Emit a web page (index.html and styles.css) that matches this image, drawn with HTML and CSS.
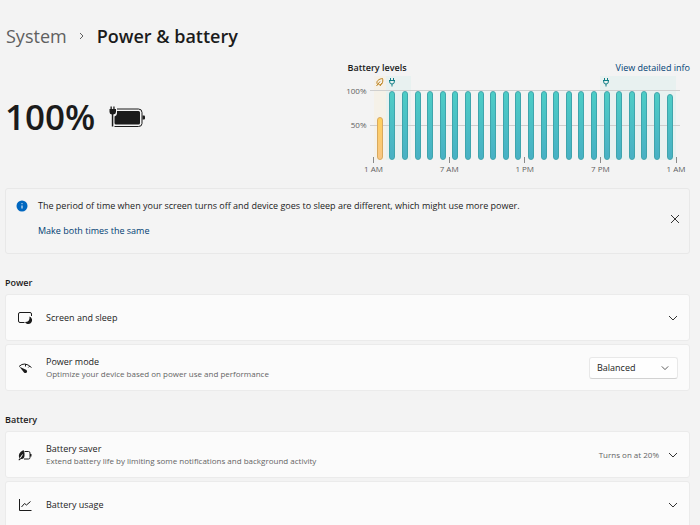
FILE: index.html
```
<!DOCTYPE html>
<html lang="en">
<head>
    <meta charset="utf-8">
    <meta name="viewport" content="width=device-width, initial-scale=1.0">
    <title>Power &amp; battery</title>
    <link rel="stylesheet" href="styles.css">
</head>
<body>
    <nav class="breadcrumb">
        <a href="#">System</a>
        <svg class="crumb-arrow" viewBox="0 0 6 10"><path d="M1 2l3 3-3 3"/></svg>
        <h1>Power &amp; battery</h1>
    </nav>

    <div class="overview">
        <div class="charge">
            <span class="percent">100%</span>
            <svg class="battery" viewBox="0 0 36 22">
                <path class="line" d="M8 3H29.500Q33 3 33 6.500V17.500Q33 20.500 29.500 20.500H5.500"/>
                <path d="M9.500 5H29.500Q31 5 31 6.500V17Q31 18.500 29.500 18.500H7Q5.500 18.500 5.500 17V10.500Q8 9.500 8 7.500V5Z"/>
                <path d="M33.500 9.500H35Q36 9.500 36 10.500V12.500Q36 13.500 35 13.500H33.500Z"/>
                <path d="M1.500 0.500H2.800V3H4.300V0.500H5.600V3H7V6Q7 8 4.300 8.500V20.500H2.800V8.500Q0.500 8 0.500 6V3H1.500Z"/>
            </svg>
        </div>

        <div class="levels">
            <div class="levels-head">
                <h2>Battery levels</h2>
                <a href="#">View detailed info</a>
            </div>
            <div class="chart">
                <div class="y-axis">
                    <span>100%</span>
                    <span>50%</span>
                </div>
                <div class="plot">
                    <div class="bands">
                        <div class="band saver">
                            <svg viewBox="0 0 10 10"><path d="M2.500 7.500C0.500 4 4 2 7.500 1.500C8.500 5 7 8.500 3.500 7.500M1.500 9L5 4.500M5 9L7 6"/></svg>
                        </div>
                        <div class="band plugged">
                            <svg viewBox="0 0 10 10"><path d="M3.500 1V3M6.500 1V3M2 3.500H8M2.700 3.500V5Q2.700 7 5 7Q7.300 7 7.300 5V3.500M5 7V9.500"/></svg>
                        </div>
                        <div class="band plugged evening">
                            <svg viewBox="0 0 10 10"><path d="M3.500 1V3M6.500 1V3M2 3.500H8M2.700 3.500V5Q2.700 7 5 7Q7.300 7 7.300 5V3.500M5 7V9.500"/></svg>
                        </div>
                    </div>
                    <div class="grid-lines"></div>
                    <div class="bars">
                        <i class="low" style="height: 62%"></i>
                        <i style="height: 100%"></i>
                        <i style="height: 100%"></i>
                        <i style="height: 100%"></i>
                        <i style="height: 100%"></i>
                        <i style="height: 100%"></i>
                        <i style="height: 100%"></i>
                        <i style="height: 100%"></i>
                        <i style="height: 100%"></i>
                        <i style="height: 100%"></i>
                        <i style="height: 100%"></i>
                        <i style="height: 100%"></i>
                        <i style="height: 100%"></i>
                        <i style="height: 100%"></i>
                        <i style="height: 100%"></i>
                        <i style="height: 100%"></i>
                        <i style="height: 100%"></i>
                        <i style="height: 100%"></i>
                        <i style="height: 100%"></i>
                        <i style="height: 100%"></i>
                        <i style="height: 100%"></i>
                        <i style="height: 100%"></i>
                        <i style="height: 99%"></i>
                        <i style="height: 96%"></i>
                    </div>
                </div>
                <div class="x-axis">
                    <span>1 AM</span>
                    <span>7 AM</span>
                    <span>1 PM</span>
                    <span>7 PM</span>
                    <span>1 AM</span>
                </div>
            </div>
        </div>
    </div>

    <div class="notice">
        <svg class="info" viewBox="0 0 12 12"><circle cx="6" cy="6" r="5.500"/><path d="M6 5.500V8.500M6 3.200V4.200"/></svg>
        <div class="notice-text">
            <p>The period of time when your screen turns off and device goes to sleep are different, which might use more power.</p>
            <a href="#">Make both times the same</a>
        </div>
        <button class="close" aria-label="Close">
            <svg viewBox="0 0 10 10"><path d="M1 1l8 8M9 1l-8 8"/></svg>
        </button>
    </div>

    <section>
        <h2>Power</h2>
        <button class="card">
            <svg class="icon" viewBox="0 0 16 16">
                <path class="line" d="M7.500 12.500H3Q1.500 12.500 1.500 11V4Q1.500 2.500 3 2.500H13Q14.500 2.500 14.500 4V6"/>
                <path d="M12.500 6.500Q15.500 8 15 11Q14 14.500 10.500 14Q8.500 13.500 8 12Q13 12 12.500 6.500Z"/>
            </svg>
            <span class="label">Screen and sleep</span>
            <svg class="chevron" viewBox="0 0 10 6"><path d="M1 1l4 4 4-4"/></svg>
        </button>
        <div class="card">
            <svg class="icon" viewBox="0 0 16 16">
                <path class="line" d="M2 6.500Q7.500 1 14.500 7.500M8.500 4V6.500M12.800 6L11.300 7.500"/>
                <path d="M2.500 6.700L9.500 10Q10.800 11.500 9.500 12.700Q8 13.500 7 12.500Z"/>
            </svg>
            <label class="label" for="mode">Power mode
                <small>Optimize your device based on power use and performance</small>
            </label>
            <div class="select">
                <select id="mode">
                    <option>Best power efficiency</option>
                    <option selected>Balanced</option>
                    <option>Best performance</option>
                </select>
                <svg class="chevron" viewBox="0 0 10 6"><path d="M1 1l4 4 4-4"/></svg>
            </div>
        </div>
    </section>

    <section>
        <h2>Battery</h2>
        <button class="card">
            <svg class="icon" viewBox="0 0 16 16">
                <path class="line" d="M7.500 4.500H11.500Q13 4.500 13 6V10.500Q13 12 11.500 12H7"/>
                <path d="M13 7H14.500V9.500H13Z"/>
                <path d="M6.500 3Q8 6 7.500 9Q7 12.500 4 12L2 13.500L1.500 12.700L2.500 11.500Q0 6 6.500 3Z"/>
                <path class="vein" d="M3 11.500L5.500 7.500"/>
            </svg>
            <span class="label">Battery saver
                <small>Extend battery life by limiting some notifications and background activity</small>
            </span>
            <span class="state">Turns on at 20%</span>
            <svg class="chevron" viewBox="0 0 10 6"><path d="M1 1l4 4 4-4"/></svg>
        </button>
        <button class="card">
            <svg class="icon" viewBox="0 0 16 16">
                <path class="line" d="M2.500 2V13.500H14.500M4.500 10L7.500 6.500L9.500 8L13.500 4.500"/>
            </svg>
            <span class="label">Battery usage</span>
            <svg class="chevron" viewBox="0 0 10 6"><path d="M1 1l4 4 4-4"/></svg>
        </button>
    </section>
</body>
</html>
```
FILE: styles.css
```
* {
    box-sizing: border-box;
}
body {
    margin: 0;
    padding: 23px 10px 0 5px;
    background: #f3f3f3;
    color: #1b1b1b;
    font-family: "Open Sans", "Noto Sans", sans-serif;
    font-size: 9px;
    line-height: 12px;
}
h1, h2, p {
    margin: 0;
}
a {
    color: #003e73;
    text-decoration: none;
}
button, select {
    font: inherit;
    color: inherit;
}
svg {
    display: block;
    flex: none;
}
h2 {
    font-size: 9px;
    font-weight: 600;
}

.breadcrumb {
    display: flex;
    align-items: center;
    padding-left: 1px;
    font-size: 18px;
    line-height: 26px;
}
.breadcrumb a {
    color: #5f5f5f;
}
.breadcrumb h1 {
    font-size: 18px;
    font-weight: 600;
}
.crumb-arrow {
    width: 6px;
    height: 10px;
    margin: 0 12px;
    fill: none;
    stroke: #5f5f5f;
}

.overview {
    display: grid;
    grid-template-columns: 1fr 1fr;
    margin-top: 13px;
}
.charge {
    display: flex;
    align-items: center;
    gap: 14px;
    padding-bottom: 4px;
}
.percent {
    font-size: 35px;
    font-weight: 600;
    line-height: 48px;
}
.battery {
    width: 36px;
    height: 22px;
    fill: #1b1b1b;
}
.line {
    fill: none;
    stroke: #1b1b1b;
}

/* battery levels chart */
.levels-head {
    display: flex;
    justify-content: space-between;
}
.chart {
    display: grid;
    grid-template-columns: 19px 1fr;
    column-gap: 7px;
    padding: 2px 14px 0 0;
    color: #5f5f5f;
    font-size: 8px;
}
.y-axis {
    display: flex;
    flex-direction: column;
    align-items: flex-end;
    gap: 22px;
    padding-top: 9px;
}
.plot {
    display: grid;
    height: 84px;
}
.bands, .grid-lines, .bars {
    grid-area: 1 / 1;
}
.bands {
    display: grid;
    grid-template-columns: repeat(24, 1fr);
}
.band svg {
    width: 10px;
    height: 10px;
    margin: 1px;
    fill: none;
}
.saver {
    background: #f5f1e8;
    stroke: #c08420;
}
.plugged {
    grid-column: span 2;
    background: #e8f1f0;
    stroke: #0f7f86;
}
.evening {
    grid-column: 19 / 25;
}
.grid-lines {
    height: 36px;
    margin: 14px -4px 0;
    border: solid #cfcfcf;
    border-width: 1px 0;
}
.bars {
    display: grid;
    grid-template-columns: repeat(24, 1fr);
    align-items: end;
    justify-items: center;
    padding-top: 15px;
}
.bars i {
    width: 6px;
    border: 1px solid #3fa5ac;
    border-radius: 3px;
    background: linear-gradient(#4dcdc6, #48b0c4);
}
.bars .low {
    border-color: #d9a95c;
    background: linear-gradient(#ffd05c, #f8c684);
}
.x-axis {
    grid-column: 2;
    display: flex;
    justify-content: space-between;
    margin: -3px -12px 0;
}
.x-axis span {
    width: 24px;
    text-align: center;
}
.x-axis span::before {
    content: "";
    display: block;
    width: 1px;
    height: 6px;
    margin: 0 auto;
    background: #8a8a8a;
}

.notice {
    display: flex;
    margin-top: 13px;
    padding: 11px 9px 16px 10px;
    border: 1px solid #e8e8e8;
    border-radius: 3px;
    background: #f4f4f4;
}
.info {
    width: 12px;
    height: 12px;
    fill: #0067c0;
}
.info path {
    stroke: #fff;
}
.notice-text {
    flex: 1;
    margin-left: 10px;
}
.notice-text p {
    margin-bottom: 13px;
}
.close {
    align-self: center;
    padding: 0;
    border: 0;
    background: none;
}
.close svg {
    width: 10px;
    height: 10px;
    stroke: #333;
}

section {
    margin-top: 23px;
}
section h2 {
    margin-bottom: 5px;
}
.card {
    display: flex;
    align-items: center;
    width: 100%;
    height: 47px;
    margin-bottom: 3px;
    padding: 0 11px;
    border: 1px solid #ebebeb;
    border-radius: 3px;
    background: #fbfbfb;
    text-align: left;
}
.icon {
    width: 16px;
    height: 16px;
    margin-right: 13px;
    fill: #1b1b1b;
}
.vein {
    stroke: #fbfbfb;
}
.label {
    flex: 1;
}
.label small {
    display: block;
    font-size: 8px;
    line-height: 11px;
}
.label small, .state {
    color: #646464;
}
.state {
    margin-right: 9px;
    font-size: 8px;
}
.chevron {
    width: 10px;
    height: 6px;
    fill: none;
    stroke: #333;
}
.select {
    display: grid;
    grid-template-columns: 100%;
    align-items: center;
    width: 89px;
}
.select select {
    grid-area: 1 / 1;
    width: 100%;
    height: 22px;
    padding: 0 7px;
    appearance: none;
    border: 1px solid #e8e8e8;
    border-bottom-color: #d2d2d2;
    border-radius: 3px;
    background: #fefefe;
}
.select .chevron {
    grid-area: 1 / 1;
    justify-self: end;
    width: 8px;
    margin-right: 9px;
    pointer-events: none;
}
```
